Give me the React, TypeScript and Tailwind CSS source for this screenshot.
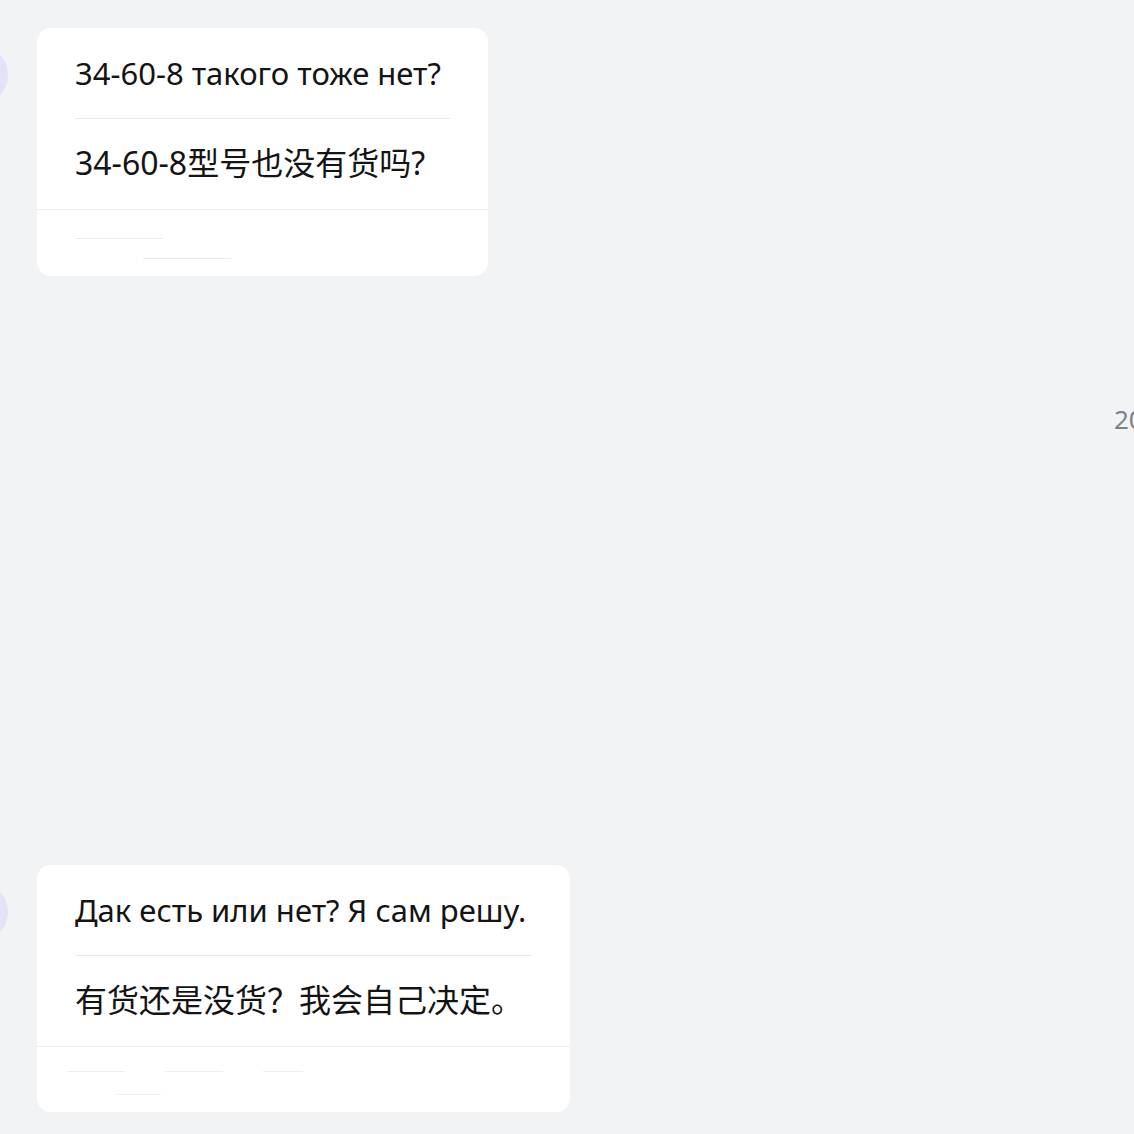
const font = { fontFamily: '"Noto Sans", "Noto Sans CJK SC", sans-serif' };

type Msg = { ru: string; zh: string; width: string; footer: "a" | "b" };

const Footer = ({ kind }: { kind: "a" | "b" }) =>
  kind === "a" ? (
    <div className="h-[66px] flex flex-col pl-[38px] pt-[28px] gap-[19px]">
      <div className="h-px w-[88px] bg-[#ececee]" />
      <div className="h-px w-[88px] ml-[68px] bg-[#ececee]" />
    </div>
  ) : (
    <div className="h-[65px] flex flex-col pl-[30px] pt-[24px] gap-[22px]">
      <div className="flex gap-[40px]">
        <div className="h-px w-[58px] bg-[#efeff1]" />
        <div className="h-px w-[58px] bg-[#efeff1]" />
        <div className="h-px w-[40px] bg-[#efeff1]" />
      </div>
      <div className="h-px w-[44px] ml-[50px] bg-[#efeff1]" />
    </div>
  );

const Bubble = ({ msg }: { msg: Msg }) => (
  <div className="flex items-start gap-[29px]">
    <div className="w-[60px] h-[60px] rounded-full bg-[#e4e2f6] ml-[-52px] mt-[17px] shrink-0" />
    <div className={`${msg.width} bg-white rounded-[14px] shrink-0`}>
      <div className="px-[38px]">
        <div className="pt-[25px] pb-[25px] text-[31px] leading-[40px] text-[#141414] whitespace-nowrap">
          {msg.ru}
        </div>
        <div className="h-px bg-[#e9e9eb]" />
        <div className="pt-[24px] pb-[26px] text-[32px] leading-[40px] text-[#141414] whitespace-nowrap">
          {msg.zh}
        </div>
      </div>
      <div className="h-px bg-[#eeeef0]" />
      <Footer kind={msg.footer} />
    </div>
  </div>
);

export default function App() {
  const first: Msg = {
    ru: "34-60-8 такого тоже нет?",
    zh: "34-60-8型号也没有货吗?",
    width: "w-[451px]",
    footer: "a",
  };
  const second: Msg = {
    ru: "Дак есть или нет? Я сам решу.",
    zh: "有货还是没货？我会自己决定。",
    width: "w-[533px]",
    footer: "b",
  };

  return (
    <div className="w-full h-[1134px] bg-[#f2f3f5] overflow-hidden flex flex-col" style={font}>
      <div className="pt-[28px]">
        <Bubble msg={first} />
      </div>
      {/* timestamp runs off the right edge, as in the source */}
      <div className="mt-[128px] pl-[1114px] text-[26px] leading-[30px] text-[#7d818a] whitespace-nowrap">
        2024-05-14 10:32
      </div>
      <div className="mt-[431px]">
        <Bubble msg={second} />
      </div>
    </div>
  );
}
